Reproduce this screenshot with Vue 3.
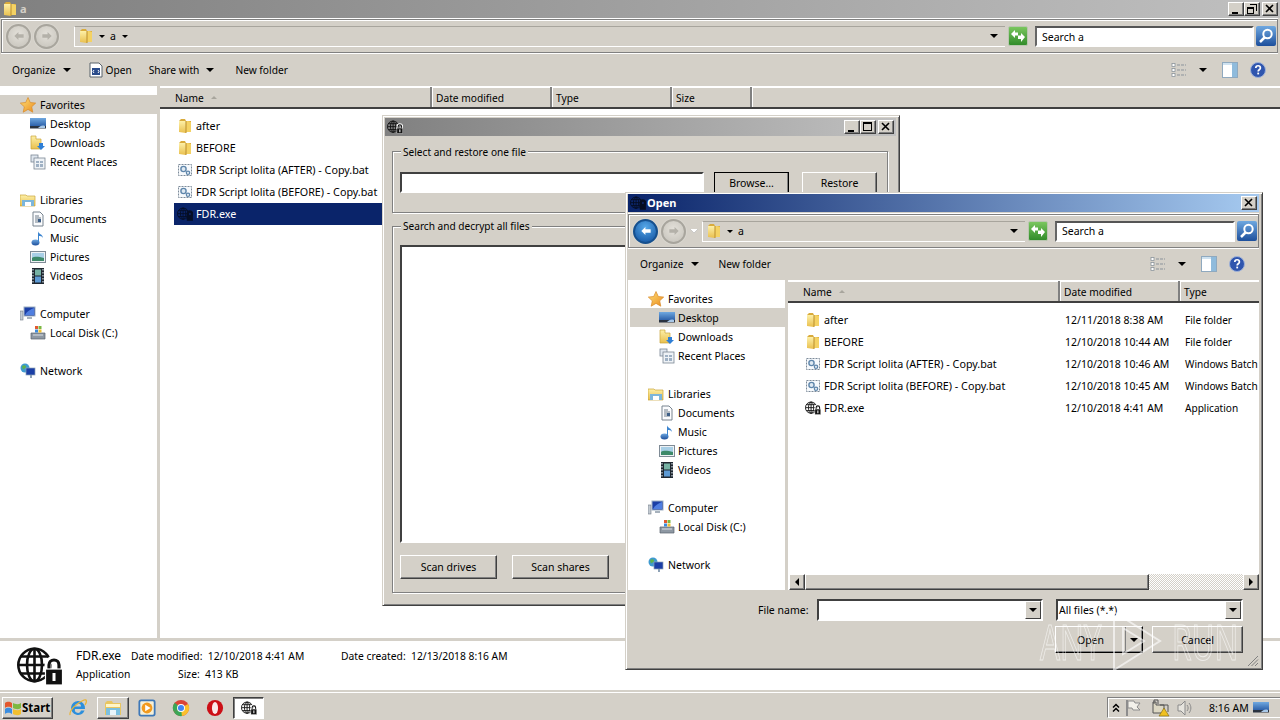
<script setup>
const navGroups = [
  { head: ['Favorites', 'star'], items: [['Desktop', 'desktop'], ['Downloads', 'downloads'], ['Recent Places', 'recent']] },
  { head: ['Libraries', 'library'], items: [['Documents', 'docs'], ['Music', 'music'], ['Pictures', 'pictures'], ['Videos', 'videos']] },
  { head: ['Computer', 'computer'], items: [['Local Disk (C:)', 'disk']] },
  { head: ['Network', 'network'], items: [] }
]
const files = [
  { name: 'after', icon: 'folder', date: '12/11/2018 8:38 AM', type: 'File folder' },
  { name: 'BEFORE', icon: 'folder', date: '12/10/2018 10:44 AM', type: 'File folder' },
  { name: 'FDR Script lolita (AFTER) - Copy.bat', icon: 'bat', date: '12/10/2018 10:46 AM', type: 'Windows Batch' },
  { name: 'FDR Script lolita (BEFORE) - Copy.bat', icon: 'bat', date: '12/10/2018 10:45 AM', type: 'Windows Batch' },
  { name: 'FDR.exe', icon: 'globe', date: '12/10/2018 4:41 AM', type: 'Application' }
]
const dialogFiles = files
</script>

<template>
  <div class="desk">
    <svg class="defs" aria-hidden="true">
      <defs>
        <linearGradient id="gf" x1="0" y1="0" x2="0" y2="1"><stop offset="0" stop-color="#fdf0a8"/><stop offset="1" stop-color="#e9bf4d"/></linearGradient>
        <linearGradient id="gs" x1="0" y1="0" x2="1" y2="1"><stop offset="0" stop-color="#ffe27a"/><stop offset="1" stop-color="#ea8a1c"/></linearGradient>
        <linearGradient id="gb" x1="0" y1="0" x2="0" y2="1"><stop offset="0" stop-color="#6fa8e0"/><stop offset="1" stop-color="#1d4f9c"/></linearGradient>
        <linearGradient id="gg" x1="0" y1="0" x2="0" y2="1"><stop offset="0" stop-color="#7cc860"/><stop offset="1" stop-color="#2f8a28"/></linearGradient>
        <symbol id="folder" viewBox="0 0 16 16">
          <path d="M2 3 4 1h4l1 2h5v11H2z" fill="#d9ab3c"/>
          <path d="M2 3h7v12l-7-1z" fill="url(#gf)"/>
          <path d="M9 3h2l3 1v10H9z" fill="#f4d264"/>
          <path d="M9 3v12" stroke="#b98d2c"/>
        </symbol>
        <symbol id="bat" viewBox="0 0 16 16">
          <rect x="1.5" y="2.5" width="13" height="11" fill="#f6f9fc" stroke="#7c8a99" stroke-dasharray="2 1"/>
          <circle cx="6.5" cy="7" r="2.6" fill="#dfe9f2" stroke="#5f86ab" stroke-width="1.4"/>
          <circle cx="11" cy="10.8" r="1.7" fill="#dfe9f2" stroke="#5f86ab" stroke-width="1.2"/>
        </symbol>
        <symbol id="globe" viewBox="0 0 46 38">
          <g fill="none" stroke="#111" stroke-width="2.600">
            <circle cx="17.500" cy="18" r="16.200"/>
            <ellipse cx="17.500" cy="18" rx="7.500" ry="16.200"/>
            <path d="M17.500 2v32M1.500 18h32M4 9.500h27M4 26.500h27"/>
          </g>
          <path d="M31 24v-6a6 6 0 0 1 12 0v6" fill="none" stroke="#fff" stroke-width="7"/>
          <path d="M32 24v-6a5 5 0 0 1 10 0v6" fill="none" stroke="#111" stroke-width="3.200"/>
          <rect x="28.500" y="22" width="17" height="16" fill="#111" stroke="#fff" stroke-width="1.200"/>
          <rect x="35.500" y="26" width="3" height="8" fill="#fff"/>
        </symbol>
        <symbol id="star" viewBox="0 0 16 16">
          <path d="M8 0.5l2.3 5 5.4.6-4 3.7 1.1 5.4L8 12.4l-4.8 2.8 1.1-5.4-4-3.7 5.4-.6z" fill="url(#gs)" stroke="#d98a2a" stroke-width=".7"/>
        </symbol>
        <symbol id="desktop" viewBox="0 0 16 16">
          <rect x="0" y="2" width="16" height="10" fill="url(#gb)"/>
          <path d="M0 10h16v2.500H0z" fill="#2a3340"/>
          <path d="M8 12h7v-2c-3-1-5 0-7 2z" fill="#a8c8e8"/>
        </symbol>
        <symbol id="downloads" viewBox="0 0 16 16">
          <path d="M1 1h5v3h5v10H1z" fill="url(#gf)" stroke="#c9a33a" stroke-width=".7"/>
          <path d="M9 8h4v3h2l-4 4-4-4h2z" fill="#2f7fd6"/>
        </symbol>
        <symbol id="recent" viewBox="0 0 16 16">
          <rect x="1" y="1" width="7" height="7" fill="#dfe6ee" stroke="#7b8794" stroke-width=".8"/>
          <rect x="4" y="4" width="11" height="11" fill="#eef2f6" stroke="#7b8794" stroke-width=".8"/>
          <path d="M6 7h3v2H6zM10 7h3v2h-3zM6 10h3v3H6zM10 10h3v3h-3z" fill="#9fb1c4"/>
        </symbol>
        <symbol id="library" viewBox="0 0 16 16">
          <path d="M0 3h6l1 1h8v10H0z" fill="url(#gf)" stroke="#c9a33a" stroke-width=".7"/>
          <path d="M2 8h12v6H2z" fill="#7cb6dc"/>
          <path d="M5 10h6v4H5z" fill="#fff"/>
        </symbol>
        <symbol id="docs" viewBox="0 0 16 16">
          <path d="M3 1h7l3 3v11H3z" fill="#fbfcfe" stroke="#78848f"/>
          <path d="M5 5h4M5 7h6M5 9h6M5 11h6" stroke="#6f7c89"/>
          <rect x="8" y="8" width="3" height="3" fill="#3d5f88"/>
        </symbol>
        <symbol id="music" viewBox="0 0 16 16">
          <ellipse cx="5.500" cy="12.500" rx="4" ry="3" fill="url(#gb)"/>
          <path d="M8 12V1c0 3 5 3 5 7-1-2-3-2-4-2v7z" fill="#3c85d0"/>
        </symbol>
        <symbol id="pictures" viewBox="0 0 16 16">
          <rect x="0.500" y="2.500" width="15" height="11" fill="#eef2f5" stroke="#7f8b96"/>
          <rect x="2" y="4" width="12" height="8" fill="#a8cfe6"/>
          <path d="M2 9c3-2 7-1 12 0v3H2z" fill="#3d8a6a"/>
        </symbol>
        <symbol id="videos" viewBox="0 0 16 16">
          <rect x="2" y="0" width="12" height="16" fill="#1f2730"/>
          <path d="M3 1v14M13 1v14" stroke="#c9d4de" stroke-width="1.200" stroke-dasharray="1.500 1.500"/>
          <rect x="5" y="1.500" width="6" height="6" fill="#76b2a4"/>
          <rect x="5" y="8.500" width="6" height="6" fill="#5d9ad4"/>
        </symbol>
        <symbol id="computer" viewBox="0 0 16 16">
          <rect x="0" y="5" width="3" height="9" fill="#c4cbd2" stroke="#6f7a85" stroke-width=".6"/>
          <rect x="4" y="1" width="11" height="9" fill="#1b3fa6" stroke="#9eb0c2"/>
          <path d="M5 9c2-4 6-6 9-7v7z" fill="#4f7ee0"/>
          <path d="M7 11h5v2H7z" fill="#a7b2bd"/>
        </symbol>
        <symbol id="disk" viewBox="0 0 16 16">
          <path d="M1 8h14v6H1z" fill="#8e98a3" stroke="#59636d" stroke-width=".7"/>
          <path d="M3 10h10" stroke="#d9dee3"/>
          <rect x="5" y="1" width="3" height="3" fill="#e35a30"/><rect x="8.500" y="1" width="3" height="3" fill="#7ab842"/>
          <rect x="5" y="4.500" width="3" height="3" fill="#3c8bdc"/><rect x="8.500" y="4.500" width="3" height="3" fill="#f0c030"/>
        </symbol>
        <symbol id="network" viewBox="0 0 16 16">
          <circle cx="5" cy="5" r="4.500" fill="#3f9ad0"/>
          <path d="M2 3c2-1 4-1 4 1s-3 1-3 3z" fill="#5fb24c"/>
          <rect x="6" y="5" width="9" height="7" fill="#1b3fa6" stroke="#8ea2b6" stroke-width=".7"/>
          <path d="M10 12h2v3h-2z" fill="#8ea2b6"/>
        </symbol>
        <symbol id="open" viewBox="0 0 16 16">
          <path d="M2 1h9l3 3v11H2z" fill="#fff" stroke="#59626b"/>
          <rect x="4" y="6" width="8" height="7" fill="#2a4b8a"/>
          <path d="M6 8l-1 1.500L6 11M10 8l1 1.500L10 11" stroke="#fff" fill="none"/>
        </symbol>
        <symbol id="views" viewBox="0 0 16 16">
          <g fill="#fff" stroke="#8b939b" stroke-width=".8"><rect x="1" y="1.500" width="3" height="3"/><rect x="1" y="6.500" width="3" height="3"/><rect x="1" y="11.500" width="3" height="3"/></g>
          <path d="M6 3h9M6 8h9M6 13h9" stroke="#8b939b" stroke-dasharray="3 1"/>
        </symbol>
        <symbol id="pane" viewBox="0 0 16 16">
          <rect x="0.500" y="0.500" width="15" height="15" fill="#fff" stroke="#8fa9bf"/>
          <rect x="1" y="1" width="14" height="2" fill="#cfe2f0"/>
          <rect x="10" y="1" width="5" height="14" fill="#8fbbdc"/>
        </symbol>
        <symbol id="help" viewBox="0 0 16 16">
          <circle cx="8" cy="8" r="7.500" fill="#2f55ae" stroke="#9fb2d8"/>
          <path d="M5.800 6c0-3 4.600-3 4.600 0 0 1.800-2.200 1.700-2.200 3.400" fill="none" stroke="#fff" stroke-width="1.700"/>
          <rect x="7.300" y="10.600" width="1.800" height="1.800" fill="#fff"/>
        </symbol>
        <symbol id="refresh" viewBox="0 0 20 20">
          <rect x="0.500" y="0.500" width="19" height="19" rx="1.500" fill="url(#gg)" stroke="#b9c7b0"/>
          <path d="M3 8l4-4v2.500h3v3H7V12zM17 11l-4 5v-3h-3V9.500h3V7z" fill="#fff"/>
        </symbol>
        <symbol id="search" viewBox="0 0 20 20">
          <rect x="0" y="0" width="20" height="20" rx="2" fill="url(#gb)"/>
          <circle cx="11.500" cy="8" r="4.200" fill="none" stroke="#fff" stroke-width="2"/>
          <path d="M8.500 11.500 4 16" stroke="#fff" stroke-width="2.500"/>
        </symbol>
        <symbol id="arrow" viewBox="0 0 24 24">
          <path d="M4 12l7-7v4h9v6h-9v4z"/>
        </symbol>
        <symbol id="flagwin" viewBox="0 0 18 18">
          <path d="M1 4c3-2 5-1 7 0v5c-2-1-4-2-7 0z" fill="#e2572d"/>
          <path d="M9 4c2 1 5 2 8 0v5c-3 2-6 1-8 0z" fill="#7db83f"/>
          <path d="M1 10c3-2 5-1 7 0v5c-2-1-4-2-7 0z" fill="#3a8de0"/>
          <path d="M9 10c2 1 5 2 8 0v5c-3 2-6 1-8 0z" fill="#f2bf2e"/>
        </symbol>
        <symbol id="ie" viewBox="0 0 20 20">
          <path d="M10 3a7 7 0 0 1 7 8H7a3 3 0 0 0 6 1.500h3.600A7 7 0 1 1 10 3zM7 8.500h6a3 3 0 0 0-6 0z" fill="#2c8fdc"/>
          <path d="M2 17c-1-4 6-12 14-15 3-1 3 2 1 5" fill="none" stroke="#eab435" stroke-width="1.300"/>
        </symbol>
        <symbol id="explorer" viewBox="0 0 20 20">
          <path d="M2 5l2-2h5l1 2h8v12H2z" fill="#e8c560"/>
          <rect x="3" y="6" width="14" height="3" fill="#fff6c8"/>
          <path d="M3 10h14v7H3z" fill="#7cc0e0"/>
          <path d="M7 12h6v5H7z" fill="#e8f4fa"/>
        </symbol>
        <symbol id="media" viewBox="0 0 20 20">
          <rect x="1.500" y="1.500" width="17" height="17" rx="2" fill="#f6f0d8" stroke="#3e78b8" stroke-width="2"/>
          <circle cx="10" cy="10" r="6" fill="#f29a1e"/>
          <path d="M8 6.500 14 10l-6 3.500z" fill="#fff"/>
        </symbol>
        <symbol id="chrome" viewBox="0 0 20 20">
          <circle cx="10" cy="10" r="9" fill="#db4437"/>
          <path d="M10 10 2.200 14.500A9 9 0 0 1 3 4.300z" fill="#3aa757"/>
          <path d="M10 10l7.800-4.500A9 9 0 0 1 10 19z" fill="#fbc02d"/>
          <path d="M10 10 2.200 14.500A9 9 0 0 0 11 19z" fill="#3aa757"/>
          <circle cx="10" cy="10" r="4.400" fill="#fff"/><circle cx="10" cy="10" r="3.400" fill="#4285f4"/>
        </symbol>
        <symbol id="opera" viewBox="0 0 20 20">
          <circle cx="10" cy="10" r="9" fill="#cc0f16"/>
          <ellipse cx="10" cy="10" rx="3.400" ry="6.800" fill="#fbe9e9"/>
        </symbol>
        <symbol id="flag" viewBox="0 0 18 18">
          <path d="M3 1v16" stroke="#8d8d8d" stroke-width="2"/>
          <path d="M4 2h6l1 2h5l-3 4 3 3H9l-1-2H4z" fill="#f3f1ea" stroke="#8d8d8d"/>
        </symbol>
        <symbol id="netwarn" viewBox="0 0 18 18">
          <path d="M1 3h3v3h8v8H1z" fill="#ddd8c4" stroke="#555"/>
          <path d="M2 5V1h4v4M8 6h8v7" fill="none" stroke="#555"/>
          <path d="M12 9l5 8H7z" fill="#f0c020" stroke="#7a6410" stroke-width=".6"/>
        </symbol>
        <symbol id="speaker" viewBox="0 0 18 18">
          <path d="M2 6h3l4-4v14l-4-4H2z" fill="#e6e4de" stroke="#8a8a8a"/>
          <path d="M11 6c1.500 2 1.500 4 0 6M13 4c2.500 3 2.500 7 0 10" fill="none" stroke="#8a8a8a"/>
        </symbol>
      </defs>
    </svg>

    <!-- Explorer window -->
    <section class="explorer">
      <header class="caption caption-gray">
        <svg class="i16"><use href="#folder"/></svg>
        <span class="cap-name">a</span>
        <div class="cap-btns">
          <button class="cap-btn"><i class="g-min"></i></button>
          <button class="cap-btn"><i class="g-rest"></i></button>
          <button class="cap-btn cap-close"><svg viewBox="0 0 10 10"><path d="M1 1l7 7M8 1 1 8" stroke="#000" stroke-width="1.600"/></svg></button>
        </div>
      </header>
      <div class="addr">
        <span class="round"><svg class="i14 dim"><use href="#arrow"/></svg></span>
        <span class="round second"><svg class="i14 flip"><use href="#arrow"/></svg></span>
        <div class="crumb">
          <svg class="i16 crumb-f"><use href="#folder"/></svg>
          <b class="tri small"></b><span class="crumb-a">a</span><b class="tri small"></b>
          <b class="tri push"></b>
        </div>
        <svg class="i20 refresh"><use href="#refresh"/></svg>
        <div class="searchbox main-search">Search a</div>
        <svg class="i20 sbtn"><use href="#search"/></svg>
      </div>
      <div class="tools">
        <span class="tool">Organize<b class="tri gap8"></b></span>
        <span class="tool t-open"><svg class="i16"><use href="#open"/></svg>Open</span>
        <span class="tool t-share">Share with<b class="tri gap8"></b></span>
        <span class="tool t-new">New folder</span>
        <span class="tools-right">
          <svg class="i16"><use href="#views"/></svg><b class="tri t-tri"></b>
          <svg class="i16 t-pane"><use href="#pane"/></svg>
          <svg class="i16 t-help"><use href="#help"/></svg>
        </span>
      </div>
      <div class="body">
        <nav class="nav">
          <div v-for="g in navGroups" :key="g.head[0]" class="nav-group">
            <div class="nav-row" :class="{ sel: g.head[0] === 'Favorites' }"><svg class="i16"><use :href="'#' + g.head[1]"/></svg><span>{{ g.head[0] }}</span></div>
            <div v-for="it in g.items" :key="it[0]" class="nav-row child"><svg class="i16"><use :href="'#' + it[1]"/></svg><span>{{ it[0] }}</span></div>
          </div>
        </nav>
        <div class="list">
          <div class="heads">
            <span class="head w-name">Name<i class="up"></i></span>
            <span class="head w-date">Date modified</span>
            <span class="head w-type">Type</span>
            <span class="head w-size">Size</span>
            <span class="head w-rest"></span>
          </div>
          <div class="rows">
            <div v-for="f in files" :key="f.name" class="row" :class="{ picked: f.name === 'FDR.exe' }">
              <svg class="i16 ric"><use :href="'#' + f.icon"/></svg><span>{{ f.name }}</span>
            </div>
          </div>
        </div>
      </div>
      <footer class="details">
        <svg class="big"><use href="#globe"/></svg>
        <div class="d-col d-a"><span class="d-name">FDR.exe</span><span>Application</span></div>
        <div class="d-col d-b"><span>Date modified:&nbsp; 12/10/2018 4:41 AM</span><span class="d-size">Size:&nbsp; 413 KB</span></div>
        <div class="d-col d-c"><span>Date created:&nbsp; 12/13/2018 8:16 AM</span></div>
      </footer>
    </section>

    <!-- Taskbar -->
    <div class="taskbar">
      <button class="start"><svg class="i18"><use href="#flagwin"/></svg>Start</button>
      <span class="tb-ic tb-first"><svg class="i20"><use href="#ie"/></svg></span>
      <span class="tb-btn tb-folder"><svg class="i20"><use href="#explorer"/></svg></span>
      <span class="tb-ic"><svg class="i18"><use href="#media"/></svg></span>
      <span class="tb-ic"><svg class="i18"><use href="#chrome"/></svg></span>
      <span class="tb-ic"><svg class="i18"><use href="#opera"/></svg></span>
      <span class="tb-btn active"><svg class="i16"><use href="#globe"/></svg></span>
      <div class="tray">
        <svg class="chev" viewBox="0 0 8 10"><path d="M1 4.500 4 1.500l3 3M1 8.500l3-3 3 3" fill="none" stroke="#000" stroke-width="1.500"/></svg>
        <svg class="i18 tr-flag"><use href="#flag"/></svg>
        <svg class="i18 tr-net"><use href="#netwarn"/></svg>
        <svg class="i18 tr-spk"><use href="#speaker"/></svg>
        <span class="clock">8:16 AM</span>
        <svg class="i16 showd"><use href="#desktop"/></svg>
      </div>
    </div>

    <!-- FDR tool window -->
    <section class="tool-win">
      <header class="caption caption-gray short">
        <svg class="i16"><use href="#globe"/></svg>
        <div class="cap-btns">
          <button class="cap-btn"><i class="g-min"></i></button>
          <button class="cap-btn"><i class="g-max"></i></button>
          <button class="cap-btn cap-close"><svg viewBox="0 0 10 10"><path d="M1 1l7 7M8 1 1 8" stroke="#000" stroke-width="1.600"/></svg></button>
        </div>
      </header>
      <div class="group g1">
        <span class="legend">Select and restore one file</span>
        <div class="g1-row">
          <div class="edit e-path"></div>
          <button class="btn default b-browse">Browse...</button>
          <button class="btn b-restore">Restore</button>
        </div>
      </div>
      <div class="group g2">
        <span class="legend">Search and decrypt all files</span>
        <div class="edit e-list"></div>
        <div class="g2-row">
          <button class="btn scan">Scan drives</button>
          <button class="btn scan">Scan shares</button>
        </div>
      </div>
    </section>

    <!-- Open dialog -->
    <section class="dialog">
      <header class="caption caption-blue">
        <svg class="i16 inv"><use href="#globe"/></svg>
        <span class="cap-open">Open</span>
        <div class="cap-btns">
          <button class="cap-btn cap-close"><svg viewBox="0 0 10 10"><path d="M1 1l7 7M8 1 1 8" stroke="#000" stroke-width="1.600"/></svg></button>
        </div>
      </header>
      <div class="addr dlg-addr">
        <span class="round active"><svg class="i14 white"><use href="#arrow"/></svg></span>
        <span class="round second tight"><svg class="i14 flip"><use href="#arrow"/></svg></span>
        <b class="tri hollow"></b>
        <div class="crumb dlg-crumb">
          <svg class="i16 crumb-f"><use href="#folder"/></svg>
          <b class="tri small"></b><span class="crumb-a">a</span>
          <b class="tri push"></b>
        </div>
        <svg class="i20 refresh"><use href="#refresh"/></svg>
        <div class="searchbox dlg-search">Search a</div>
        <svg class="i20 sbtn"><use href="#search"/></svg>
      </div>
      <div class="tools dlg-tools">
        <span class="tool">Organize<b class="tri gap8"></b></span>
        <span class="tool t-newd">New folder</span>
        <span class="tools-right">
          <svg class="i16"><use href="#views"/></svg><b class="tri t-tri"></b>
          <svg class="i16 t-pane"><use href="#pane"/></svg>
          <svg class="i16 t-help"><use href="#help"/></svg>
        </span>
      </div>
      <div class="dlg-body">
        <nav class="nav dlg-nav">
          <div v-for="g in navGroups" :key="g.head[0]" class="nav-group">
            <div class="nav-row"><svg class="i16"><use :href="'#' + g.head[1]"/></svg><span>{{ g.head[0] }}</span></div>
            <div v-for="it in g.items" :key="it[0]" class="nav-row child" :class="{ sel: it[0] === 'Desktop' }"><svg class="i16"><use :href="'#' + it[1]"/></svg><span>{{ it[0] }}</span></div>
          </div>
        </nav>
        <div class="list dlg-list">
          <div class="heads">
            <span class="head w-dname">Name<i class="up"></i></span>
            <span class="head w-date">Date modified</span>
            <span class="head w-dtype">Type</span>
          </div>
          <div class="rows dlg-rows">
            <div v-for="f in dialogFiles" :key="f.name" class="row dlg-row">
              <span class="c-name"><svg class="i16 ric"><use :href="'#' + f.icon"/></svg><span>{{ f.name }}</span></span>
              <span class="c-date">{{ f.date }}</span>
              <span class="c-type">{{ f.type }}</span>
            </div>
          </div>
          <div class="hscroll">
            <span class="sb-btn"><b class="ta left"></b></span>
            <span class="sb-thumb"></span>
            <span class="sb-track"></span>
            <span class="sb-btn"><b class="ta right"></b></span>
          </div>
        </div>
      </div>
      <div class="dlg-form">
        <div class="form-row">
          <label class="fn-label">File name:</label>
          <div class="combo c-file"><span class="combo-txt"></span><span class="combo-btn"><b class="tri"></b></span></div>
          <div class="combo c-filter"><span class="combo-txt">All files (*.*)</span><span class="combo-btn"><b class="tri"></b></span></div>
        </div>
        <div class="form-row btn-row">
          <div class="split"><span class="split-main">Open</span><span class="split-arrow"><b class="tri"></b></span></div>
          <button class="btn cancel">Cancel</button>
        </div>
      </div>
      <svg class="grip" viewBox="0 0 12 12"><path d="M11 1 1 11M11 4.500 4.500 11M11 8 8 11" stroke="#808080"/></svg>
    </section>

    <!-- Watermark -->
    <div class="mark">
      <span class="mark-any">ANY</span>
      <svg viewBox="0 0 50 62" class="mark-tri"><path d="M2 2 48 31 2 60z M11 18 32 31 11 44z" fill="none" stroke="#fff" stroke-opacity=".6" stroke-width="2"/></svg>
      <span class="mark-run">RUN</span>
    </div>
  </div>
</template>

<style>
html, body { margin: 0; background: #d4d0c8; }
</style>

<style scoped>
* { box-sizing: border-box; }
.desk { position: relative; width: 1280px; height: 720px; overflow: hidden; display: flex; flex-direction: column; background: #d4d0c8; color: #000; font: 10.5px/14px "Noto Sans", sans-serif; }
.defs { position: absolute; width: 0; height: 0; }
button { font: inherit; color: inherit; padding: 0; margin: 0; }
.explorer { flex: 1; min-height: 0; display: flex; flex-direction: column; }

.i14 { width: 14px; height: 14px; }
.i16 { width: 16px; height: 16px; flex: none; }
.i18 { width: 18px; height: 18px; flex: none; }
.i20 { width: 20px; height: 20px; flex: none; }
.flip { transform: scaleX(-1); fill: #b4b1a9; }
.dim { fill: #b4b1a9; }
.white { fill: #fff; }

/* shared triangles */
.tri { display: inline-block; width: 0; height: 0; border: 4px solid transparent; border-top: 4px solid #000; border-bottom: 0; flex: none; }
.tri.small { border-width: 3px 3px 0; }
.tri.hollow { border-top-color: #fff; margin: 0 4px 0 4px; filter: drop-shadow(0 0 .5px #555); }
.gap8 { margin-left: 7px; }

/* captions */
.caption { height: 18px; display: flex; align-items: center; flex: none; }
.caption-gray { background: linear-gradient(90deg, #808080, #c0c0c0); }
.caption-blue { background: linear-gradient(90deg, #0a246a, #a6caf0); }
.caption-gray .i16, .caption-blue .i16 { margin-left: 2px; }
.cap-name { margin-left: 2px; color: #d4d0c8; font-size: 11px; font-weight: 700; }
.cap-open { margin-left: 1px; color: #fff; font-weight: 700; font-size: 11px; }
.cap-btns { margin-left: auto; display: flex; gap: 0; padding-right: 2px; }
.cap-btn { width: 16px; height: 14px; background: #d4d0c8; border: 1px solid; border-color: #fff #404040 #404040 #fff; box-shadow: inset -1px -1px #808080; display: flex; align-items: center; justify-content: center; position: relative; }
.cap-close { margin-left: 2px; }
.cap-btn svg { width: 10px; height: 10px; }
.g-min { width: 6px; height: 2px; background: #000; margin: 7px 3px 0 0; }
.g-max { width: 9px; height: 9px; border: 1px solid #000; border-top-width: 2px; margin: 0 1px 1px 0; }
.g-rest { width: 7px; height: 7px; border: 1px solid #000; border-top-width: 2px; margin: 3px 3px 0 0; position: relative; background: #d4d0c8; box-shadow: 2px -2px 0 -0px #d4d0c8, 3px -3px 0 0 #000; }

/* address bar */
.addr { flex: none; height: 34px; margin: 1px 2px 0 1px; border: 1px solid #808080; box-shadow: 0 -1px #fff, 0 1px #fff, inset 1px 1px #fff; display: flex; align-items: center; padding: 0 1px 0 4px; }
.round { width: 25px; height: 25px; border-radius: 50%; border: 2px solid #a8a59d; background: radial-gradient(circle at 50% 40%, #e4e1da, #c4c1b9); display: flex; align-items: center; justify-content: center; box-shadow: 0 0 0 1px #d9d6cf; flex: none; }
.round.second { margin-left: 3px; }
.round.tight { margin-left: 3px; }
.round.active { background: radial-gradient(circle at 50% 30%, #56a8e8, #0f4f9e); border-color: #16508e; }
.crumb { flex: 1; height: 21px; margin-left: 15px; display: flex; align-items: center; background: #d4d0c8; border-left: 1px solid #fff; border-bottom: 1px solid #fff; border-top: 1px solid #a8a59d; padding: 0 7px 0 3px; }
.crumb-f { margin-right: 5px; }
.crumb-a { margin: 0 6px 0 5px; }
.push { margin-left: auto; }
.refresh { margin-left: 3px; }
.searchbox { width: 219px; height: 21px; margin-left: 7px; background: #fff; border: 2px solid; border-color: #555 #fff #fff #666; padding-left: 5px; line-height: 16px; }
.main-search { line-height: 18px; }
.sbtn { margin-left: 2px; }

/* toolbar */
.tools { flex: none; height: 31px; margin-top: 2px; display: flex; align-items: center; padding: 0 0 2px 12px; font-size: 10.2px; }
.tool { display: flex; align-items: center; }
.t-open { margin-left: 17px; gap: 2px; }
.t-share { margin-left: 17px; }
.t-new { margin-left: 21px; }
.t-newd { margin-left: 20px; }
.tools-right { margin-left: auto; margin-right: 14px; display: flex; align-items: center; }
.t-tri { margin-left: 12px; }
.t-pane { margin-left: 15px; }
.t-help { margin-left: 12px; }

/* body */
.body { flex: 1; min-height: 0; display: flex; background: #fff; }
.nav { width: 160px; flex: none; background: #fff; border-right: 3px solid #d4d0c8; padding-top: 9px; }
.nav-group { margin-bottom: 19px; }
.nav-row { height: 19px; display: flex; align-items: center; padding-left: 20px; gap: 4px; }
.nav-row.child { padding-left: 30px; gap: 4px; }
.nav-row.sel { background: #d4d0c8; }
.list { flex: 1; min-width: 0; display: flex; flex-direction: column; }
.heads { flex: none; height: 22px; margin-top: 1px; display: flex; background: #d4d0c8; border-bottom: 2px solid #404040; box-shadow: inset 0 1px #fff; font-size: 10.2px; }
.head { height: 20px; padding-left: 15px; line-height: 22px; border-right: 2px solid; border-color: #808080; box-shadow: 1px 0 #fff; position: relative; }
.w-name { width: 272px; }
.w-date { width: 120px; padding-left: 4px; }
.w-type { width: 120px; padding-left: 4px; }
.w-size { width: 80px; padding-left: 4px; }
.w-rest { flex: 1; border-right: 0; box-shadow: none; }
.up { display: inline-block; width: 0; height: 0; border: 3px solid transparent; border-bottom: 3px solid #a8a59d; border-top: 0; margin: 0 0 3px 7px; }
.rows { padding: 6px 0 0 14px; font-size: 10.75px; }
.row { height: 22px; display: flex; align-items: center; width: 240px; white-space: nowrap; }
.ric { margin: 0 3px 0 3px; }
.row.picked { background: #0a246a; color: #fff; }
.row.picked .ric { filter: brightness(0) opacity(.65); }

/* details */
.details { flex: none; height: 54px; display: flex; background: #fff; border-top: 3px solid #d4d0c8; border-bottom: 2px solid #d4d0c8; align-items: flex-start; padding: 6px 0 0 17px; position: relative; font-size: 10.3px; }
.big { width: 46px; height: 38px; flex: none; }
.d-col { display: flex; flex-direction: column; gap: 4px; padding-top: 2px; white-space: nowrap; }
.d-a { margin-left: 13px; width: 55px; }
.d-b { width: 210px; }
.d-size { margin-left: 47px; }
.d-name { font-size: 12px; }

/* taskbar */
.taskbar { flex: none; height: 28px; background: #d4d0c8; border-top: 1px solid #fff; display: flex; align-items: center; padding: 2px 0 0 2px; }
.start { width: 51px; height: 22px; display: flex; align-items: center; padding-left: 1px; font-weight: 700; font-size: 11.5px; background: #d4d0c8; border: 1px solid; border-color: #fff #404040 #404040 #fff; box-shadow: inset -1px -1px #808080; }
.tb-ic { width: 34px; display: flex; justify-content: center; }
.tb-first { margin-left: 10px; margin-right: 4px; width: 30px; }
.tb-btn { width: 32px; height: 22px; display: flex; align-items: center; justify-content: center; border: 1px solid; border-color: #fff #404040 #404040 #fff; box-shadow: inset -1px -1px #808080; }
.tb-folder { margin-right: 1px; }
.tb-btn.active { width: 31px; margin-left: 1px; background: #fff; border-color: #404040 #fff #fff #404040; box-shadow: inset 1px 1px #808080; }
.tray { margin-left: auto; height: 21px; width: 173px; display: flex; align-items: center; border-left: 1px solid #808080; border-top: 1px solid #808080; border-bottom: 1px solid #fff; padding-left: 4px; box-shadow: inset 1px 1px #fff; }
.chev { width: 8px; height: 10px; }
.tr-flag { margin-left: 4px; }
.tr-net { margin-left: 10px; }
.tr-spk { margin-left: 6px; }
.clock { margin-left: 15px; white-space: nowrap; font-size: 10.5px; }
.showd { margin-left: 4px; }

/* tool window */
.tool-win { position: absolute; left: 382px; top: 115px; width: 518px; height: 491px; background: #d4d0c8; border: 1px solid; border-color: #d4d0c8 #404040 #404040 #d4d0c8; box-shadow: inset 1px 1px #fff, inset -1px -1px #808080; padding: 2px 3px 0 2px; }
.short { height: 18px; }
.group { position: relative; border: 1px solid #808080; box-shadow: 1px 1px #fff, inset 1px 1px #fff; margin-left: 7px; width: 496px; padding: 20px 8px 0 7px; }
.g1 { height: 62px; margin-top: 15px; }
.g2 { height: 367px; margin-top: 13px; padding-top: 18px; }
.g2 .legend { top: -8px; }
.legend { position: absolute; left: 8px; top: -7px; background: #d4d0c8; padding: 0 2px; white-space: nowrap; font-size: 10.1px; }
.g1-row { display: flex; }
.edit { background: #fff; border: 2px solid; border-color: #404040 #fff #fff #404040; box-shadow: inset 0 0 0 0 #000; }
.e-path { width: 304px; height: 21px; }
.btn { background: #d4d0c8; border: 1px solid; border-color: #fff #404040 #404040 #fff; box-shadow: inset -1px -1px #808080; text-align: center; }
.btn.default { outline: 1px solid #000; outline-offset: -1px; }
.b-browse { width: 75px; height: 22px; margin-left: 10px; }
.b-restore { width: 75px; height: 22px; margin-left: 13px; }
.e-list { width: 479px; height: 298px; }
.g2-row { display: flex; gap: 15px; margin-top: 12px; }
.scan { width: 97px; height: 24px; }

/* dialog */
.dialog { position: absolute; left: 625px; top: 192px; width: 638px; height: 478px; background: #d4d0c8; border: 1px solid; border-color: #d4d0c8 #404040 #404040 #d4d0c8; box-shadow: inset 1px 1px #fff, inset -1px -1px #808080; padding: 1px 3px 0 2px; display: flex; flex-direction: column; }
.dialog .caption { margin: 0; }
.inv { filter: brightness(0) opacity(.7); }
.dlg-addr { height: 34px; margin: 2px 0 0; padding-left: 4px; }
.dlg-crumb { margin-left: 0; }
.dlg-crumb .crumb-a { margin-right: 0; }
.dlg-search { width: 180px; }
.dlg-tools { margin-top: 1px; padding-left: 12px; }
.dlg-body { flex: none; height: 310px; display: flex; background: #fff; }
.dlg-nav { width: 160px; }
.dlg-nav .nav-row { padding-left: 20px; }
.dlg-nav .nav-row.child { padding-left: 31px; gap: 3px; }
.dlg-nav .nav-row.sel { margin-left: 2px; padding-left: 29px; }
.w-dname { width: 272px; }
.w-dtype { flex: 1; padding-left: 4px; border-right: 0; box-shadow: none; }
.dlg-list { position: relative; }
.dlg-rows { padding: 6px 0 0 14px; flex: 1; font-size: 10.5px; }
.dlg-row { width: auto; }
.c-name { width: 263px; display: flex; align-items: center; white-space: nowrap; font-size: 10.75px; }
.c-date { width: 120px; }
.c-type { white-space: nowrap; width: 74px; font-size: 10.1px; }
.hscroll { height: 16px; flex: none; display: flex; margin-left: 1px; }
.sb-btn { width: 16px; background: #d4d0c8; border: 1px solid; border-color: #fff #404040 #404040 #fff; box-shadow: inset -1px -1px #808080; display: flex; align-items: center; justify-content: center; }
.sb-thumb { width: 344px; background: #d4d0c8; border: 1px solid; border-color: #fff #404040 #404040 #fff; box-shadow: inset -1px -1px #808080; }
.sb-track { flex: 1; background: repeating-conic-gradient(#fff 0 25%, #d4d0c8 0 50%) 0 0 / 2px 2px; }
.ta { width: 0; height: 0; border: 4px solid transparent; }
.ta.left { border-right: 4px solid #000; border-left: 0; }
.ta.right { border-left: 4px solid #000; border-right: 0; }
.dlg-form { flex: 1; position: relative; padding: 9px 0 0; }
.form-row { display: flex; align-items: center; }
.fn-label { margin-left: 130px; width: 59px; white-space: nowrap; }
.combo { height: 22px; background: #fff; border: 2px solid; border-color: #404040 #fff #fff #404040; display: flex; justify-content: space-between; }
.c-file { width: 226px; }
.c-filter { width: 187px; margin-left: 13px; }
.combo-txt { padding: 2px 0 0 1px; line-height: 14px; white-space: nowrap; }
.combo-btn { width: 16px; height: 18px; background: #d4d0c8; border: 1px solid; border-color: #fff #404040 #404040 #fff; display: flex; align-items: center; justify-content: center; }
.btn-row { margin-top: 5px; padding-left: 427px; }
.split { width: 88px; height: 27px; display: flex; background: #d4d0c8; border: 1px solid; border-color: #fff #000 #000 #fff; box-shadow: inset -1px -1px #808080; }
.split-main { flex: 1; text-align: center; line-height: 27px; }
.split-arrow { width: 17px; border-left: 1px solid #808080; display: flex; align-items: center; justify-content: center; }
.cancel { width: 91px; height: 27px; margin-left: 9px; }
.grip { position: absolute; right: 3px; bottom: 2px; width: 12px; height: 12px; }

/* watermark */
.mark { position: absolute; left: 1040px; top: 610px; width: 192px; height: 62px; display: flex; align-items: center; font: 400 49px/62px "Noto Sans", sans-serif; color: transparent; -webkit-text-stroke: 1px rgba(255,255,255,.6); pointer-events: none; }
.mark span { display: block; width: 63px; white-space: nowrap; transform: scaleX(.64); transform-origin: 0 50%; }
.mark-any { margin-right: 9px; }
.mark-tri { width: 50px; height: 62px; flex: none; margin-right: 10px; }
</style>
